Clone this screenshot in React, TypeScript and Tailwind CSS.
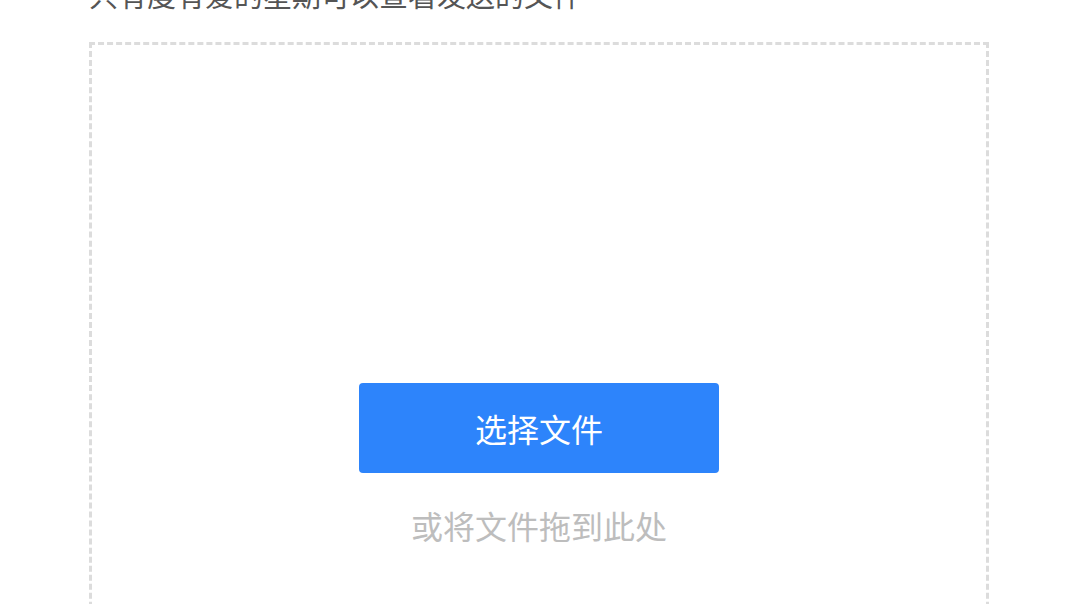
export default function App() {
  return (
    <div
      className="h-[604px] w-[1076px] overflow-hidden bg-white pl-[89px]"
      style={{ fontFamily: '"Noto Sans CJK SC", "Noto Sans", sans-serif' }}
    >
      <p className="-mt-[20px] text-[29px] leading-[29px] text-[#555]">只有度有爱的星期可以查看发送的文件</p>
      <div className="mt-[33px] flex h-[620px] w-[900px] flex-col items-center border-[3px] border-dashed border-[#dcdcdc] pt-[338px]">
        <button className="flex h-[90px] w-[360px] items-center justify-center rounded-[4px] bg-[#2d84fb] text-[32px] text-white">
          选择文件
        </button>
        <p className="mt-[36px] text-[32px] leading-[32px] text-[#bdbdbd]">或将文件拖到此处</p>
      </div>
    </div>
  )
}
